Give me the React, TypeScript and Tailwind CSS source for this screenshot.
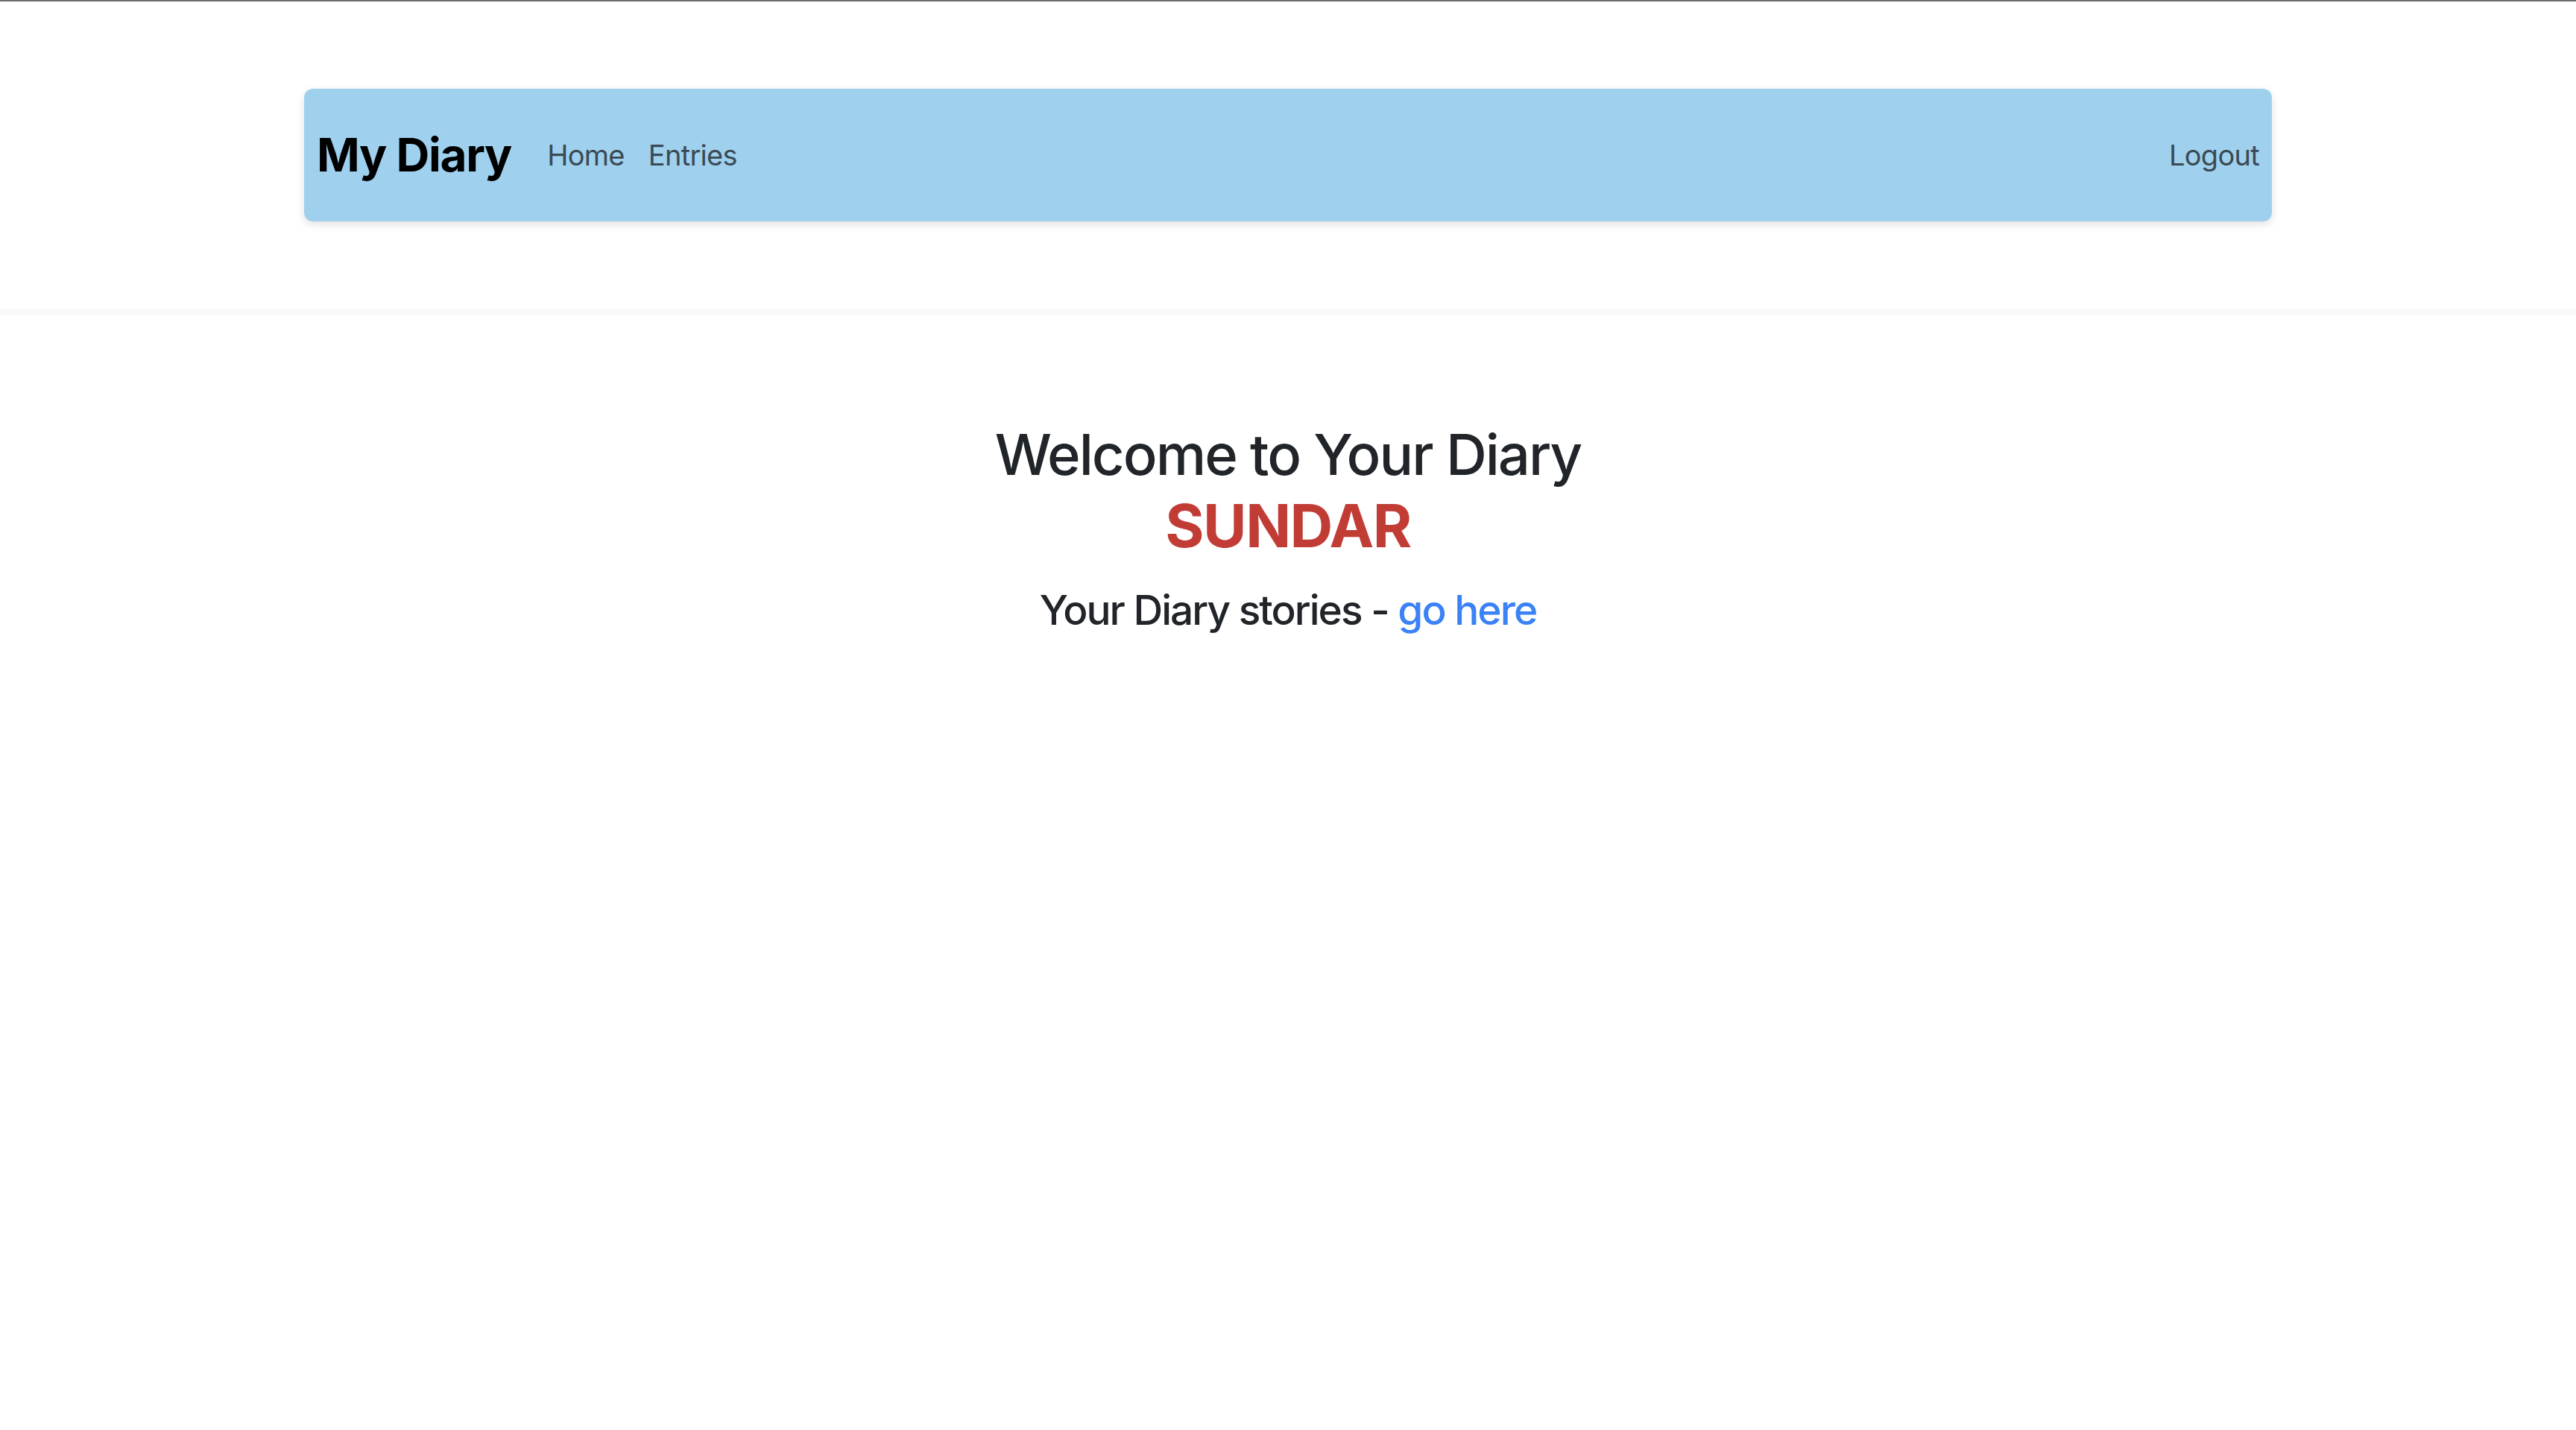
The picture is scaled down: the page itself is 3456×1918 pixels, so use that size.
export default function App() {
  return (
    <div className="min-h-screen bg-white border-t-2 border-[#6b6b6b] font-['Inter',sans-serif] text-[#212529]">
      <header className="pt-[117px] pb-[117px] border-b-[9px] border-[#f8f9fa]">
        <nav className="w-[2640px] mx-auto h-[178px] flex items-center px-[17px] rounded-[12px] bg-[#9fd1ef] shadow-[0_4px_12px_rgba(0,0,0,0.12)]">
          <a href="#" className="text-[62px] font-bold text-black leading-[1.2] tracking-[-1.3px] mr-[32px]">
            My Diary
          </a>
          <a href="#" className="text-[38px] leading-[1.5] text-[#3b4a54] px-[16px] tracking-[-0.7px]">
            Home
          </a>
          <a href="#" className="text-[38px] leading-[1.5] text-[#3b4a54] px-[16px] tracking-[-0.7px]">
            Entries
          </a>
          <a href="#" className="ml-auto text-[38px] leading-[1.5] text-[#3b4a54] tracking-[-0.7px]">
            Logout
          </a>
        </nav>
      </header>

      <main className="pt-[138px] text-center">
        <h1 className="text-[76px] leading-[96px] font-medium mb-[31px] tracking-[-2px]">
          Welcome to Your Diary
          <br />
          <span className="text-[80px] font-bold tracking-[-1.5px] text-[#c23c36]">SUNDAR</span>
        </h1>
        <h3 className="text-[55px] leading-[1.2] font-medium tracking-[-2px]">
          Your Diary stories -{" "}
          <a href="#" className="text-[#3b82f6]">
            go here
          </a>
        </h3>
      </main>
    </div>
  );
}
